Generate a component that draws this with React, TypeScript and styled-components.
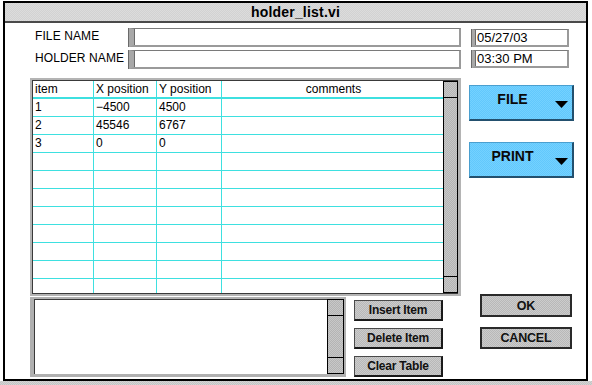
import styled, { createGlobalStyle } from 'styled-components';

const GlobalStyle = createGlobalStyle`
  html, body {
    margin: 0;
    padding: 0;
    background: #ffffff;
  }
  body {
    font-family: 'Liberation Sans', Arial, sans-serif;
    color: #000;
  }
`;

const dither = (a: string, b: string) => `repeating-conic-gradient(${a} 0 25%, ${b} 0 50%) 0 0 / 2px 2px`;

const Page = styled.div`
  width: 592px;
  height: 385px;
  overflow: hidden;
  display: flex;
  flex-direction: column;
`;

const Window = styled.div`
  margin: 1px 0 0 3px;
  width: 585px;
  height: 380px;
  box-sizing: border-box;
  border: 2px solid #000;
  display: flex;
  flex-direction: column;
  background: #fff;
`;

const BottomEdge = styled.div`
  flex: 1;
  background: ${dither('#c4c4c4', '#d4d4d4')};
`;

const TitleBar = styled.div`
  height: 18px;
  background: ${dither('#d2d2d2', '#dcdcdc')};
  border-bottom: 2px solid #4a4a4a;
  display: flex;
  align-items: center;
  justify-content: center;
  font-size: 14px;
  font-weight: bold;
  letter-spacing: 0.2px;
`;

const Content = styled.div`
  flex: 1;
  display: flex;
  gap: 8px;
  padding-left: 25px;
`;

const LeftColumn = styled.div`
  width: 431px;
  display: flex;
  flex-direction: column;
`;

const RightColumn = styled.div`
  width: 105px;
  display: flex;
  flex-direction: column;
`;

const FormRow = styled.div<{ $top: number }>`
  display: flex;
  align-items: center;
  height: 19px;
  margin-top: ${(p) => p.$top}px;
`;

const Label = styled.div`
  width: 94px;
  margin-left: 5px;
  font-size: 12px;
  letter-spacing: 0.1px;
  margin-top: -3px;
  white-space: nowrap;
`;

const TextBox = styled.div<{ $width: number; $bar: number }>`
  width: ${(p) => p.$width}px;
  height: 100%;
  box-sizing: border-box;
  background: #fff;
  border-top: 1px solid #7a7a7a;
  border-left: ${(p) => p.$bar}px solid #a8a8a8;
  border-bottom: 2px solid #9a9a9a;
  border-right: 2px solid #9a9a9a;
  box-shadow: inset 1px 0 0 #6a6a6a, -1px 0 0 #6a6a6a;
  font-size: 13px;
  line-height: 15px;
  padding-left: 2px;
`;

const TableFrame = styled.div`
  margin-top: 9px;
  height: 218px;
  box-sizing: border-box;
  border: 2px solid #b4b4b4;
  border-right-width: 3px;
  display: flex;
`;

const TableInner = styled.div`
  flex: 1;
  display: flex;
  border: 1px solid #3a3a3a;
  border-right: none;
  overflow: hidden;
`;

const Grid = styled.div`
  flex: 1;
  overflow: hidden;
  background: #fff;
`;

const Row = styled.div<{ $header?: boolean }>`
  display: grid;
  grid-template-columns: 61px 63px 65px 1fr;
  height: ${(p) => (p.$header ? 16 : 17)}px;
  border-bottom: ${(p) => (p.$header ? '2px' : '1px')} solid #3ee0e0;
`;

const Cell = styled.div<{ $center?: boolean }>`
  border-right: 1px solid #3ee0e0;
  font-size: 12px;
  line-height: 17px;
  padding-left: 2px;
  text-align: ${(p) => (p.$center ? 'center' : 'left')};
  white-space: nowrap;
  overflow: hidden;

  &:last-child {
    border-right: none;
  }
`;

const ScrollBar = styled.div`
  width: 15px;
  box-sizing: border-box;
  border: 1px solid #000;
  background: ${dither('#b4b4b4', '#c8c8c8')};
  display: flex;
  flex-direction: column;
  justify-content: space-between;
`;

const ScrollEnd = styled.div<{ $bottom?: boolean }>`
  height: 15px;
  border-${(p) => (p.$bottom ? 'top' : 'bottom')}: 1px solid #000;
`;

const BottomRow = styled.div`
  margin-top: 1px;
  height: 80px;
  display: flex;
  gap: 8px;
`;

const NotesBox = styled.div`
  width: 316px;
  box-sizing: border-box;
  border-left: 4px solid #b0b0b0;
  border-top: 2px solid #b0b0b0;
  border-bottom: 3px solid #b0b0b0;
  border-right: 2px solid #b0b0b0;
  display: flex;
`;

const NotesArea = styled.div`
  flex: 1;
  background: #fff;
  border-top: 1px solid #3a3a3a;
  border-left: 1px solid #3a3a3a;
`;

const NotesScroll = styled(ScrollBar)`
  width: 17px;
  height: 100%;
`;

const ButtonStack = styled.div`
  display: flex;
  flex-direction: column;
  gap: 7px;
  padding-top: 3px;
`;

const GrayButton = styled.div<{ $width: number; $height: number }>`
  width: ${(p) => p.$width}px;
  height: ${(p) => p.$height}px;
  box-sizing: border-box;
  background: ${dither('#b8b8b8', '#cccccc')};
  border: 1px solid #4a4a4a;
  border-right: 2px solid #1a1a1a;
  border-bottom: 2px solid #1a1a1a;
  display: flex;
  align-items: center;
  justify-content: center;
  font-size: 12px;
  font-weight: bold;
  color: #111;
  letter-spacing: -0.2px;
`;

const ActionButton = styled(GrayButton)`
  border: 2px solid #2a2a2a;
  font-size: 12.5px;
`;

const DateBox = styled(TextBox)`
  margin-left: 3px;
  height: 18px;
`;

const DateRow = styled.div<{ $top: number }>`
  margin-top: ${(p) => p.$top}px;
  height: 18px;
  display: flex;
`;

const MenuButton = styled.div<{ $top: number }>`
  margin-top: ${(p) => p.$top}px;
  height: 36px;
  box-sizing: border-box;
  background: ${dither('#62c8fc', '#74d1ff')};
  border-top: 1px solid #4a9fcf;
  border-left: 1px solid #4a9fcf;
  border-right: 2px solid #23506e;
  border-bottom: 2px solid #23506e;
  display: flex;
  align-items: flex-start;
`;

const MenuText = styled.div`
  flex: 1;
  text-align: center;
  font-size: 14px;
  font-weight: bold;
  padding-top: 5px;
  color: #0a0a0a;
`;

const Arrow = styled.svg`
  margin: 15px 4px 0 0;
  flex-shrink: 0;
`;

const ActionGroup = styled.div`
  margin-top: 116px;
  display: flex;
  flex-direction: column;
  gap: 10px;
  padding-left: 11px;
`;

const rows = [
  ['1', '\u22124500', '4500', ''],
  ['2', '45546', '6767', ''],
  ['3', '0', '0', ''],
  ...Array.from({ length: 8 }, () => ['', '', '', '']),
];

const DropButton = ({ label, top }: { label: string; top: number }) => (
  <MenuButton $top={top}>
    <MenuText>{label}</MenuText>
    <Arrow width="13" height="7" viewBox="0 0 13 7">
      <polygon points="0,0 13,0 6.5,7" fill="#000" />
    </Arrow>
  </MenuButton>
);

export default function App() {
  return (
    <>
      <GlobalStyle />
      <Page>
        <Window>
          <TitleBar>holder_list.vi</TitleBar>
          <Content>
            <LeftColumn>
              <FormRow $top={5}>
                <Label>FILE NAME</Label>
                <TextBox $width={332} $bar={5} />
              </FormRow>
              <FormRow $top={3}>
                <Label>HOLDER NAME</Label>
                <TextBox $width={332} $bar={5} />
              </FormRow>
              <TableFrame>
                <TableInner>
                  <Grid>
                    <Row $header>
                      <Cell>item</Cell>
                      <Cell>X position</Cell>
                      <Cell>Y position</Cell>
                      <Cell $center>comments</Cell>
                    </Row>
                    {rows.map((r, i) => (
                      <Row key={i}>
                        {r.map((c, j) => (
                          <Cell key={j}>{c}</Cell>
                        ))}
                      </Row>
                    ))}
                  </Grid>
                  <ScrollBar>
                    <ScrollEnd />
                    <ScrollEnd $bottom />
                  </ScrollBar>
                </TableInner>
              </TableFrame>
              <BottomRow>
                <NotesBox>
                  <NotesArea />
                  <NotesScroll>
                    <ScrollEnd />
                    <ScrollEnd $bottom />
                  </NotesScroll>
                </NotesBox>
                <ButtonStack>
                  <GrayButton $width={89} $height={21}>Insert Item</GrayButton>
                  <GrayButton $width={89} $height={21}>Delete Item</GrayButton>
                  <GrayButton $width={89} $height={21}>Clear Table</GrayButton>
                </ButtonStack>
              </BottomRow>
            </LeftColumn>
            <RightColumn>
              <DateRow $top={6}>
                <DateBox $width={97} $bar={3}>05/27/03</DateBox>
              </DateRow>
              <DateRow $top={3}>
                <DateBox $width={97} $bar={3}>03:30 PM</DateBox>
              </DateRow>
              <DropButton label="FILE" top={17} />
              <DropButton label="PRINT" top={21} />
              <ActionGroup>
                <ActionButton $width={92} $height={23}>OK</ActionButton>
                <ActionButton $width={92} $height={22}>CANCEL</ActionButton>
              </ActionGroup>
            </RightColumn>
          </Content>
        </Window>
        <BottomEdge />
      </Page>
    </>
  );
}
